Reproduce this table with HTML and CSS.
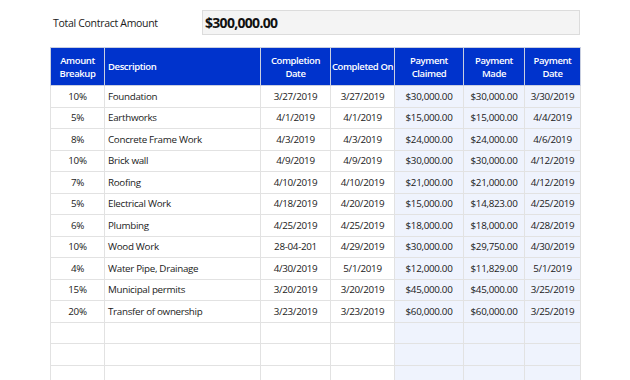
FILE: index.html
```html
<!DOCTYPE html>
<html>
<head>
<meta charset="utf-8">
<link rel="stylesheet" href="styles.css">
</head>
<body>
<div class="page">
  <div class="total">
    <div class="total-label">Total Contract Amount</div>
    <div class="total-value">$300,000.00</div>
  </div>
  <table class="sheet">
    <colgroup>
      <col class="c1"><col class="c2"><col class="c3"><col class="c4"><col class="c5"><col class="c6"><col class="c7">
    </colgroup>
    <thead>
      <tr>
        <th>Amount<br>Breakup</th>
        <th class="left">Description</th>
        <th>Completion<br>Date</th>
        <th>Completed On</th>
        <th>Payment<br>Claimed</th>
        <th>Payment<br>Made</th>
        <th>Payment<br>Date</th>
      </tr>
    </thead>
    <tbody>
      <tr><td>10%</td><td class="left">Foundation</td><td>3/27/2019</td><td>3/27/2019</td><td class="pay">$30,000.00</td><td class="pay">$30,000.00</td><td class="pay">3/30/2019</td></tr>
      <tr><td>5%</td><td class="left">Earthworks</td><td>4/1/2019</td><td>4/1/2019</td><td class="pay">$15,000.00</td><td class="pay">$15,000.00</td><td class="pay">4/4/2019</td></tr>
      <tr><td>8%</td><td class="left">Concrete Frame Work</td><td>4/3/2019</td><td>4/3/2019</td><td class="pay">$24,000.00</td><td class="pay">$24,000.00</td><td class="pay">4/6/2019</td></tr>
      <tr><td>10%</td><td class="left">Brick wall</td><td>4/9/2019</td><td>4/9/2019</td><td class="pay">$30,000.00</td><td class="pay">$30,000.00</td><td class="pay">4/12/2019</td></tr>
      <tr><td>7%</td><td class="left">Roofing</td><td>4/10/2019</td><td>4/10/2019</td><td class="pay">$21,000.00</td><td class="pay">$21,000.00</td><td class="pay">4/12/2019</td></tr>
      <tr><td>5%</td><td class="left">Electrical Work</td><td>4/18/2019</td><td>4/20/2019</td><td class="pay">$15,000.00</td><td class="pay">$14,823.00</td><td class="pay">4/25/2019</td></tr>
      <tr><td>6%</td><td class="left">Plumbing</td><td>4/25/2019</td><td>4/25/2019</td><td class="pay">$18,000.00</td><td class="pay">$18,000.00</td><td class="pay">4/28/2019</td></tr>
      <tr><td>10%</td><td class="left">Wood Work</td><td>28-04-201</td><td>4/29/2019</td><td class="pay">$30,000.00</td><td class="pay">$29,750.00</td><td class="pay">4/30/2019</td></tr>
      <tr><td>4%</td><td class="left">Water Pipe, Drainage</td><td>4/30/2019</td><td>5/1/2019</td><td class="pay">$12,000.00</td><td class="pay">$11,829.00</td><td class="pay">5/1/2019</td></tr>
      <tr><td>15%</td><td class="left">Municipal permits</td><td>3/20/2019</td><td>3/20/2019</td><td class="pay">$45,000.00</td><td class="pay">$45,000.00</td><td class="pay">3/25/2019</td></tr>
      <tr><td>20%</td><td class="left">Transfer of ownership</td><td>3/23/2019</td><td>3/23/2019</td><td class="pay">$60,000.00</td><td class="pay">$60,000.00</td><td class="pay">3/25/2019</td></tr>
      <tr><td></td><td></td><td></td><td></td><td class="pay"></td><td class="pay"></td><td class="pay"></td></tr>
      <tr><td></td><td></td><td></td><td></td><td class="pay"></td><td class="pay"></td><td class="pay"></td></tr>
      <tr><td></td><td></td><td></td><td></td><td class="pay"></td><td class="pay"></td><td class="pay"></td></tr>
    </tbody>
  </table>
</div>
</body>
</html>
```
FILE: styles.css
```css
html, body {
  margin: 0;
  padding: 0;
  background: #ffffff;
  overflow: hidden;
}
.page {
  width: 630px;
  height: 380px;
  padding: 10px 0 0 50px;
  box-sizing: border-box;
  font-family: "Open Sans", "Noto Sans", sans-serif;
  color: #1a1a1a;
}
.total {
  display: flex;
  align-items: center;
  height: 25px;
  width: 530px;
}
.total-label {
  width: 149px;
  padding-left: 3px;
  font-size: 10.5px;
  letter-spacing: -0.3px;
}
.total-value {
  flex: 1;
  height: 25px;
  box-sizing: border-box;
  border: 1px solid #dcdcdc;
  background: #f4f4f4;
  font-size: 14px;
  font-weight: 700;
  line-height: 23px;
  padding-left: 2px;
  color: #111;
  letter-spacing: -0.7px;
}
.sheet {
  margin-top: 12px;
  border-collapse: collapse;
  table-layout: fixed;
  width: 530px;
  font-size: 9.8px;
  letter-spacing: -0.3px;
}
.c1 { width: 54px; }
.c2 { width: 156px; }
.c3 { width: 70px; }
.c4 { width: 64px; }
.c5 { width: 69px; }
.c6 { width: 61px; }
.c7 { width: 56px; }
.sheet th {
  background: #0033cc;
  color: #ffffff;
  font-weight: 600;
  height: 37px;
  padding: 0;
  border: 1px solid #c9cfe0;
  line-height: 13px;
  font-size: 9.5px;
  letter-spacing: -0.4px;
  white-space: nowrap;
}
.sheet td {
  height: 20.5px;
  padding: 0;
  border: 1px solid #e2e2e2;
  text-align: center;
  color: #1a1a1a;
  white-space: nowrap;
}
.sheet th.left, .sheet td.left {
  text-align: left;
  padding-left: 3px;
}
.sheet td.pay {
  background: #eff3fd;
}
```
